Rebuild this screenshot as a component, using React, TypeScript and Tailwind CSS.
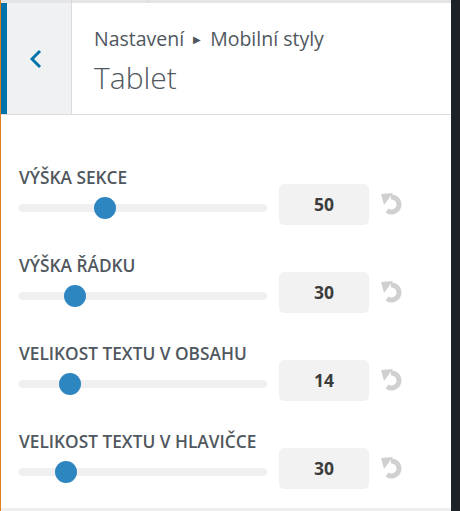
const ROWS = [
  { label: "Výška sekce", value: 50, thumb: 75 },
  { label: "Výška řádku", value: 30, thumb: 45 },
  { label: "Velikost textu v obsahu", value: 14, thumb: 40 },
  { label: "Velikost textu v hlavičce", value: 30, thumb: 36 },
];

function ResetIcon() {
  return (
    <svg width="23" height="23" viewBox="0 0 23 23" className="text-[#d0d0d0]">
      <path
        d="M10 5 A 7.5 7.5 0 1 1 6 18.5"
        fill="none"
        stroke="currentColor"
        strokeWidth="5"
      />
      <polygon points="0,2 12,1 3,13" fill="currentColor" />
    </svg>
  );
}

export default function App() {
  return (
    <div
      className="flex w-[460px] h-[511px] bg-white overflow-hidden"
      style={{ fontFamily: "'Open Sans', 'Liberation Sans', sans-serif" }}
    >
      <div className="w-px shrink-0 bg-[#e0801f]" />

      <div className="flex-1 flex flex-col min-w-0">
        {/* strip from the panel above */}
        <div className="h-[3px] shrink-0 flex bg-[#e5e5e5]">
          <div className="w-[71px] border-r border-[#d6d6d6]" />
          <div className="w-[76px] border-r border-[#d6d6d6]" />
        </div>

        <div className="h-[112px] shrink-0 flex border-b border-[#dcdcde]">
          <button className="w-[71px] h-full flex items-center pl-[23px] bg-[#f0f1f2] border-l-[6px] border-[#0073aa] border-r border-r-[#dcdcde]">
            <svg width="12" height="20" viewBox="0 0 12 20">
              <path d="M10 2 L2 10 L10 18" fill="none" stroke="#0073aa" strokeWidth="3" />
            </svg>
          </button>
          <div className="pl-[22px] pt-[23px]">
            <div className="text-[19.5px] leading-[26px] text-[#50575e] flex items-center whitespace-nowrap">
              Nastavení
              <span className="mx-[9px] text-[10px]">▶</span>
              Mobilní styly
            </div>
            <div className="mt-[8px] text-[30px] leading-[36px] font-light text-[#50575e]">
              Tablet
            </div>
          </div>
        </div>

        <div className="flex-1 min-h-0 overflow-hidden pt-[53px] pl-[18px]">
          {ROWS.map((row) => (
            <div key={row.label} className="h-[88px] flex items-start">
              <div className="w-[248px] shrink-0">
                <div className="text-[17.3px] leading-[20px] font-semibold uppercase text-[#50575e] whitespace-nowrap">
                  {row.label}
                </div>
                <div className="relative mt-[9px] h-[22px] flex items-center">
                  <div className="w-full h-[8px] rounded-full bg-[#f0f0f0]" />
                  <div
                    className="absolute top-0 w-[22px] h-[22px] rounded-full bg-[#2e86c1]"
                    style={{ left: row.thumb }}
                  />
                </div>
              </div>
              <div className="ml-[12px] mt-[16px] w-[90px] h-[41px] shrink-0 rounded-[5px] bg-[#f2f2f2] flex items-center justify-center text-[17.5px] font-bold text-[#3c3c3c]">
                {row.value}
              </div>
              <div className="ml-[12px] mt-[24px]">
                <ResetIcon />
              </div>
            </div>
          ))}
        </div>

        <div className="h-[3px] shrink-0 bg-[#eeeeee]" />
      </div>

      <div className="w-[9px] shrink-0 bg-[#1d2327]" />
    </div>
  );
}
